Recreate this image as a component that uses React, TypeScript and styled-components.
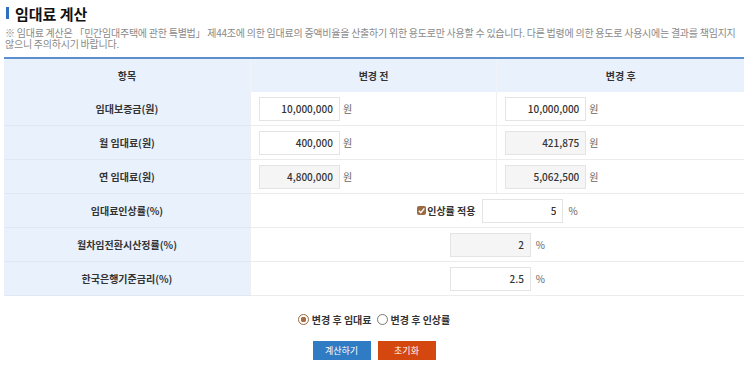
import styled, { createGlobalStyle } from "styled-components";

const GlobalStyle = createGlobalStyle`
  body {
    margin: 0;
    background: #fff;
    font-family: "Noto Sans CJK KR", "Noto Sans", sans-serif;
    color: #333;
  }
`;

const rows = [
  { label: "임대보증금(원)", before: "10,000,000", beforeRo: false, after: "10,000,000", afterRo: false, unit: "원" },
  { label: "월 임대료(원)", before: "400,000", beforeRo: false, after: "421,875", afterRo: true, unit: "원" },
  { label: "연 임대료(원)", before: "4,800,000", beforeRo: true, after: "5,062,500", afterRo: true, unit: "원" },
];

export default function App() {
  return (
    <Page>
      <GlobalStyle />
      <Title>임대료 계산</Title>
      <Notice>
        ※ 임대료 계산은 「민간임대주택에 관한 특별법」 제44조에 의한 임대료의 증액비율을 산출하기 위한 용도로만 사용할 수 있습니다. 다른 법령에 의한 용도로 사용시에는 결과를 책임지지 않으니 주의하시기 바랍니다.
      </Notice>
      <Table>
        <colgroup>
          <col style={{ width: "33.3%" }} />
          <col style={{ width: "33.3%" }} />
          <col />
        </colgroup>
        <thead>
          <tr>
            <Th>항목</Th>
            <Th>변경 전</Th>
            <Th>변경 후</Th>
          </tr>
        </thead>
        <tbody>
          {rows.map((r) => (
            <tr key={r.label}>
              <Label>{r.label}</Label>
              <Cell>
                <Field readOnly={r.beforeRo} defaultValue={r.before} />
                <Unit>{r.unit}</Unit>
              </Cell>
              <Cell>
                <Field readOnly={r.afterRo} defaultValue={r.after} />
                <Unit>{r.unit}</Unit>
              </Cell>
            </tr>
          ))}
          <tr>
            <Label>임대료인상률(%)</Label>
            <Cell colSpan={2} $center>
              <Check>
                <CheckBox>
                  <svg width="9" height="9" viewBox="0 0 10 10">
                    <path d="M2 5.2 L4.2 7.4 L8.2 2.6" fill="none" stroke="#fff" strokeWidth="1.6" />
                  </svg>
                </CheckBox>
                인상률 적용
              </Check>
              <Field defaultValue="5" />
              <Unit $wide>%</Unit>
            </Cell>
          </tr>
          <tr>
            <Label>월차임전환시산정률(%)</Label>
            <Cell colSpan={2} $center>
              <Field readOnly defaultValue="2" />
              <Unit $wide>%</Unit>
            </Cell>
          </tr>
          <tr>
            <Label>한국은행기준금리(%)</Label>
            <Cell colSpan={2} $center>
              <Field defaultValue="2.5" />
              <Unit $wide>%</Unit>
            </Cell>
          </tr>
        </tbody>
      </Table>
      <RadioRow>
        <RadioLabel>
          <Radio $checked />
          변경 후 임대료
        </RadioLabel>
        <RadioLabel>
          <Radio />
          변경 후 인상률
        </RadioLabel>
      </RadioRow>
      <Buttons>
        <Button $color="#2f7cc5">계산하기</Button>
        <Button $color="#d4470e">초기화</Button>
      </Buttons>
    </Page>
  );
}

const Page = styled.div`
  width: 740px;
  padding: 3px 6px 0 4px;
`;

const Title = styled.h2`
  display: flex;
  align-items: center;
  gap: 6px;
  margin: 0 0 0 2px;
  height: 20px;
  font-size: 15px;
  font-weight: 700;
  color: #111;
  &::before {
    content: "";
    width: 3px;
    height: 12px;
    background: #2f6fc0;
  }
`;

const Notice = styled.p`
  margin: 4px 0 0 1px;
  font-size: 10px;
  line-height: 11px;
  color: #8a8a8a;
  letter-spacing: -0.25px;
  word-break: keep-all;
`;

const Table = styled.table`
  width: 740px;
  margin-top: 8px;
  border-collapse: collapse;
  table-layout: fixed;
  border-top: 2px solid #5b8fd0;
  font-size: 10px;
`;

const Th = styled.th`
  height: 33px;
  padding: 0;
  background: #e9f1fc;
  font-weight: 700;
  color: #333;
  border-left: 1px solid #f0f3f8;
  &:first-child {
    border-left: none;
  }
`;

const Label = styled.th`
  height: 33px;
  padding: 0;
  background: #e9f1fc;
  font-weight: 700;
  color: #333;
  border-bottom: 1px solid #dfe8f4;
`;

const Cell = styled.td<{ $center?: boolean }>`
  height: 33px;
  padding: 0 0 0 8px;
  border-bottom: 1px solid #ececec;
  border-left: 1px solid #f0f0f0;
  white-space: nowrap;
  text-align: ${({ $center }) => ($center ? "center" : "left")};
  ${({ $center }) => ($center ? "padding: 0;" : "")}
`;

const Field = styled.input`
  width: 81px;
  height: 24px;
  box-sizing: border-box;
  border: 1px solid #e4e4e4;
  background: ${({ readOnly }) => (readOnly ? "#f5f5f5" : "#fff")};
  text-align: right;
  padding: 0 6px 0 0;
  font-family: inherit;
  font-size: 10px;
  font-weight: 500;
  color: #333;
  vertical-align: middle;
  outline: none;
`;

const Unit = styled.span<{ $wide?: boolean }>`
  display: inline-block;
  vertical-align: middle;
  margin-left: ${({ $wide }) => ($wide ? "5px" : "3px")};
  font-size: 10px;
  color: #666;
`;

const Check = styled.span`
  display: inline-flex;
  align-items: center;
  vertical-align: middle;
  margin-right: 7px;
  font-weight: 700;
  color: #333;
`;

const CheckBox = styled.span`
  display: inline-flex;
  align-items: center;
  justify-content: center;
  width: 9px;
  height: 9px;
  margin-right: 1px;
  border-radius: 2px;
  background: #9b6a43;
`;

const RadioRow = styled.div`
  display: flex;
  justify-content: center;
  gap: 5px;
  margin-top: 16px;
  font-size: 10px;
  font-weight: 700;
  color: #333;
`;

const RadioLabel = styled.label`
  display: inline-flex;
  align-items: center;
  gap: 3px;
`;

const Radio = styled.span<{ $checked?: boolean }>`
  width: 9px;
  height: 9px;
  border-radius: 50%;
  border: 1px solid ${({ $checked }) => ($checked ? "#9b6a43" : "#777")};
  background: ${({ $checked }) =>
    $checked ? "radial-gradient(circle, #a86c43 0 2.6px, #fff 3px)" : "#fff"};
`;

const Buttons = styled.div`
  display: flex;
  justify-content: center;
  gap: 7px;
  margin-top: 14px;
`;

const Button = styled.button<{ $color: string }>`
  width: 58px;
  height: 19px;
  padding: 0;
  border: none;
  background: ${({ $color }) => $color};
  color: #fff;
  font-family: inherit;
  font-size: 9px;
`;
